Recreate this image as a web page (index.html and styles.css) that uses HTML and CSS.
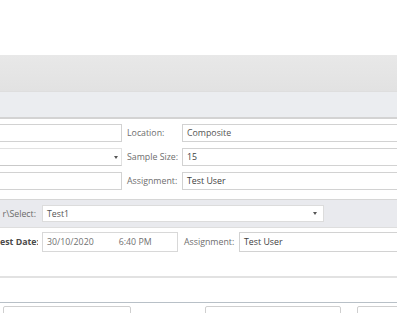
FILE: index.html
```html
<!DOCTYPE html>
<html>
<head>
<meta charset="utf-8">
<link rel="stylesheet" href="styles.css">
</head>
<body>
<div class="page">
  <div class="top-space"></div>
  <div class="toolbar"></div>
  <div class="subbar"></div>

  <div class="fields">
    <div class="box left"></div>
    <div class="label">Location:</div>
    <div class="box right">Composite</div>

    <div class="box left select"><span class="arrow"></span></div>
    <div class="label">Sample Size:</div>
    <div class="box right dark">15</div>

    <div class="box left"></div>
    <div class="label">Assignment:</div>
    <div class="box right dark">Test User</div>
  </div>

  <div class="band">
    <div class="blabel">r\Select:</div>
    <div class="box bselect">Test1<span class="arrow"></span></div>
  </div>

  <div class="testrow">
    <div class="tlabel">est Date:</div>
    <div class="box datebox"><span>30/10/2020</span><span>6:40 PM</span></div>
    <div class="label alabel">Assignment:</div>
    <div class="box tright dark">Test User</div>
  </div>

  <div class="line1"></div>
  <div class="line2"></div>

  <div class="bottom">
    <div class="bbox b1"></div>
    <div class="bbox b2"></div>
    <div class="bbox b3"></div>
  </div>
</div>
</body>
</html>
```

FILE: styles.css
```css
html, body {
  margin: 0;
  padding: 0;
  background: #ffffff;
}
body {
  width: 397px;
  height: 313px;
  overflow: hidden;
  font-family: "Open Sans", "Noto Sans", sans-serif;
  font-size: 8.8px;
  color: #6a6a6a;
}
.page {
  width: 397px;
  overflow: hidden;
}
.top-space {
  height: 55px;
}
.toolbar {
  height: 36px;
  background: linear-gradient(#e8e8e8, #e2e2e2);
  border-bottom: 1px solid #dedede;
}
.subbar {
  height: 25px;
  background: #ebedf0;
  border-bottom: 2px solid #d3d3d3;
}
.fields {
  display: grid;
  grid-template-columns: 122px 60px 1fr;
  grid-auto-rows: 18px;
  row-gap: 6px;
  padding: 5px 0 9px 0;
}
.box {
  box-sizing: border-box;
  border: 1px solid #d2d2d2;
  background: #fff;
  display: flex;
  align-items: center;
  padding-left: 4px;
  color: #555;
  white-space: nowrap;
  position: relative;
}
.dark {
  color: #3e3e3e;
}
.left {
  margin-left: -4px;
}
.right {
  margin-right: -6px;
}
.label {
  display: flex;
  align-items: center;
  padding-left: 5px;
  white-space: nowrap;
  color: #6e6e6e;
}
.select {
  justify-content: flex-end;
  padding-right: 3px;
  border-color: #e2e2e2 #e2e2e2 #c9c9c9 #e2e2e2;
}
.arrow {
  width: 0;
  height: 0;
  border-left: 2.5px solid transparent;
  border-right: 2.5px solid transparent;
  border-top: 3px solid #555;
}
.band {
  display: flex;
  align-items: center;
  height: 27px;
  background: #e9eaee;
  border-top: 1px solid #d6d6d6;
  border-bottom: 1px solid #dedede;
}
.blabel {
  width: 36px;
  text-align: right;
  white-space: nowrap;
  color: #6a6a6a;
}
.bselect {
  margin-left: 6px;
  width: 282px;
  height: 17px;
  justify-content: space-between;
  padding-right: 6px;
  border-color: #dcdcdc;
}
.testrow {
  display: flex;
  align-items: center;
  height: 20px;
  margin-top: 4px;
}
.tlabel {
  width: 38px;
  flex-shrink: 0;
  font-weight: bold;
  color: #4a4a4a;
  white-space: nowrap;
  overflow: hidden;
}
.datebox {
  flex-shrink: 0;
  margin-left: 4px;
  width: 136px;
  height: 20px;
  gap: 25px;
  color: #707070;
  border-color: #d8d8d8;
}
.alabel {
  flex-shrink: 0;
  padding-left: 6px;
  width: 55px;
  height: 20px;
}
.tright {
  flex: 1;
  height: 20px;
  margin-right: -6px;
}
.line1 {
  margin-top: 24px;
  height: 2px;
  background: #e2e2e2;
}
.line2 {
  margin-top: 24px;
  height: 1px;
  background: #b8c0c7;
}
.bottom {
  display: flex;
  margin-top: 3px;
}
.bbox {
  flex-shrink: 0;
  box-sizing: border-box;
  height: 12px;
  border: 1px solid #cfcfcf;
  border-radius: 2px;
  background: #fff;
}
.b1 {
  margin-left: 3px;
  width: 128px;
}
.b2 {
  margin-left: 74px;
  width: 136px;
}
.b3 {
  margin-left: 16px;
  width: 60px;
}
```
